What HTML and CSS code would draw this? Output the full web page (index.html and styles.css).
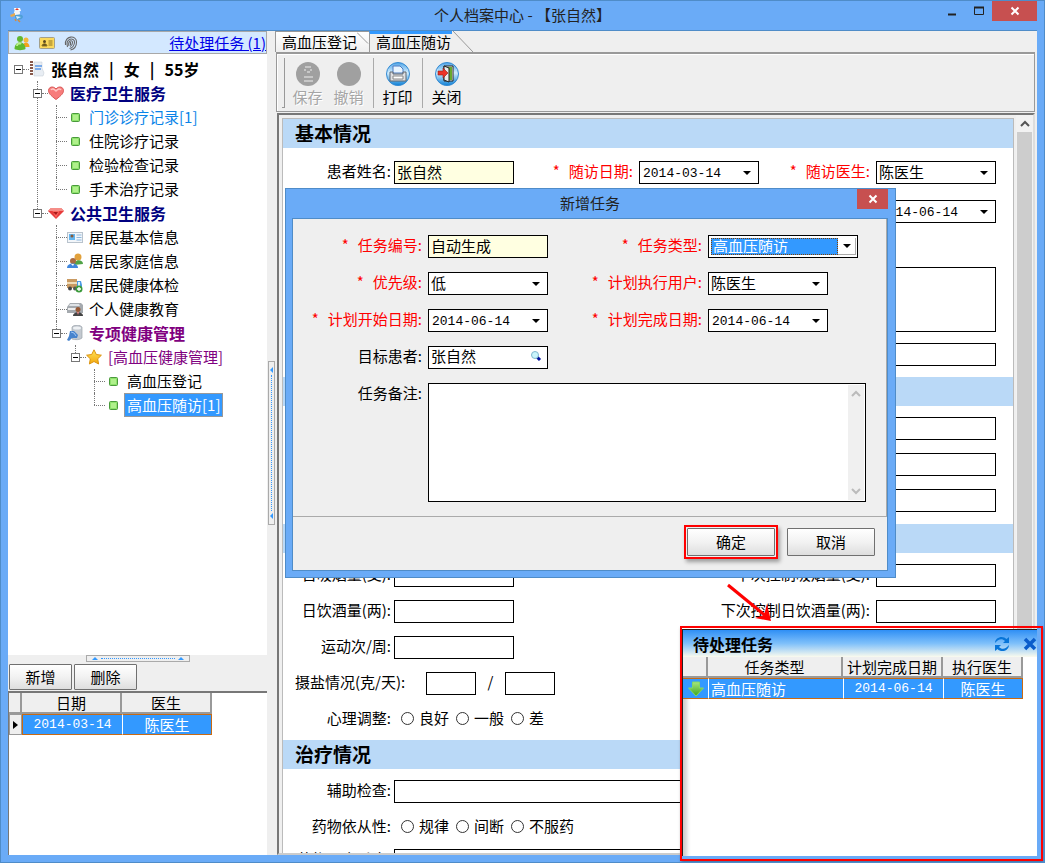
FILE: index.html
```html
<!DOCTYPE html>
<html lang="zh-CN">
<head>
<meta charset="utf-8">
<title>个人档案中心 - 【张自然】</title>
<link rel="stylesheet" href="styles.css">
</head>
<body>
<svg class="defs" width="0" height="0" aria-hidden="true">
  <defs>
    <linearGradient id="blueBall" x1="0" y1="0" x2="0" y2="1"><stop offset="0" stop-color="#4fa3e6"/><stop offset=".45" stop-color="#d4efff"/><stop offset="1" stop-color="#0b7fd6"/></linearGradient>
    <linearGradient id="green" x1="0" y1="0" x2="0" y2="1"><stop offset="0" stop-color="#a6e67d"/><stop offset="1" stop-color="#3da51f"/></linearGradient>
    <linearGradient id="gold" x1="0" y1="0" x2="0" y2="1"><stop offset="0" stop-color="#ffe45c"/><stop offset="1" stop-color="#f3a70c"/></linearGradient>
  </defs>
  <symbol id="leaf" viewBox="0 0 16 16"><rect x="4.500" y="4.500" width="8" height="8" rx="1" fill="#8ee26b" stroke="#4a9a3c"/><rect x="6" y="6" width="5" height="5" fill="#b0f08c"/></symbol>
  <symbol id="chev" viewBox="0 0 10 10"><path d="M1 7l4-4 4 4" fill="none" stroke="currentColor" stroke-width="2"/></symbol>
  <symbol id="cross" viewBox="0 0 10 10"><path d="M1.500 1.500l7 7M8.500 1.500l-7 7" stroke="currentColor" stroke-width="2"/></symbol>
</svg>
<div class="window">
  <header class="titlebar">
    <svg class="app-icon" width="16" height="16" viewBox="0 0 16 16"><path d="M5 1l6 0 1 3-6 1z" fill="#fff"/><path d="M8 1v3M6.500 2.500h3" stroke="#e23a2a"/><circle cx="8" cy="6" r="3" fill="#f2f5f8"/><path d="M1 8l5-2 0 3-4 1z" fill="#e8aa50"/><path d="M6 8c4-1 8-1 8 2-1 3-6 4-8 1z" fill="#4f9fd6"/><path d="M7 9l5 1-4 2z" fill="#d8f0ff"/><path d="M9 13l2 2M6 12l1 2" stroke="#d98b3a" stroke-width="1.500"/></svg>
    <h1>个人档案中心 - 【张自然】</h1>
    <div class="controls">
      <button class="ctl" aria-label="最小化"><svg width="12" height="12" viewBox="0 0 12 12"><path d="M2 9.500h8" stroke="#222" stroke-width="2"/></svg></button>
      <button class="ctl" aria-label="最大化"><svg width="12" height="12" viewBox="0 0 12 12"><path d="M1.500 2v7.500h9V2" fill="none" stroke="#222"/><path d="M1 2.500h10" stroke="#222" stroke-width="2"/></svg></button>
      <button class="close" aria-label="关闭窗口"><svg width="10" height="10"><use href="#cross"/></svg></button>
    </div>
  </header>

  <div class="content">
    <aside class="side">
      <div class="side-bar">
        <svg width="16" height="16" viewBox="0 0 16 16"><circle cx="12" cy="5" r="2.500" fill="#f5b93a"/><path d="M8.500 12c0-6 7-6 7 0z" fill="#f2a31a"/><circle cx="6" cy="4" r="3" fill="#61b832"/><path d="M.5 14c0-9 11-9 11 0-2 1.500-9 1.500-11 0z" fill="#5fb92f"/><path d="M3 11c0-3 3-3 4-2" stroke="#b8ee8e" stroke-width="2" fill="none"/></svg>
        <svg width="16" height="16" viewBox="0 0 16 16"><rect x=".5" y="2.500" width="15" height="11" rx="1" fill="#fbd95c" stroke="#a3a08b"/><circle cx="5.500" cy="6.500" r="1.500" fill="#5a4a20"/><path d="M3 11c0-3 5-3 5 0zM9.500 6h4M9.500 8h4M9.500 10h4" fill="#5a4a20" stroke="#8f7420"/></svg>
        <svg width="14" height="16" viewBox="0 0 14 16"><g fill="none" stroke="#666" stroke-width="1.100"><path d="M1.500 10C0 0 13 0 12.500 7c0 4-2 7-6 8"/><path d="M3.500 12C1 3 10.500 2 10.500 7c0 3-2 6-5 6.500"/><path d="M5 11C3.500 6 8.500 4 8.500 7.500 8.500 10 7 11 6 11.500"/><path d="M6.500 7v3"/></g></svg>
        <a href="#tasks">待处理任务 (1)</a>
      </div>
      <nav class="tree">
        <ul class="root">
          <li>
            <div class="node"><button class="box" aria-label="折叠"></button><i class="dash"></i><svg width="16" height="16" viewBox="0 0 16 16"><path d="M5 1h8v6l2 5-1 3H5z" fill="#e8edf3" stroke="#c1c8d0" stroke-width=".5"/><path d="M2.500 0v15" stroke="#87584a" stroke-width="3" stroke-dasharray="2 1"/><path d="M6 5h7M6 8h6" stroke="#5795e8" stroke-width="1.500"/></svg><b class="person"><span>张自然</span><span>|</span><span>女</span><span>|</span><span>55岁</span></b></div>
            <ul>
              <li>
                <div class="node"><button class="box" aria-label="折叠"></button><i class="dash"></i><svg width="16" height="16" viewBox="0 0 16 16"><path d="M8 14.500C2 10 .5 8 .5 5.500.5 2 5 .5 8 4c3-3.500 7.500-2 7.500 1.500C15.500 8 14 10 8 14.500z" fill="#f77c7b" stroke="#d95655"/><path d="M3 5c1-2 3-1 5 1 2-2 4-3 5-1" fill="none" stroke="#ffc6c3" stroke-width="1.500"/></svg><b class="navy">医疗卫生服务</b></div>
                <ul>
                  <li><div class="node leaf"><i class="dash"></i><svg width="16" height="16"><use href="#leaf"/></svg><span class="link">门诊诊疗记录[1]</span></div></li>
                  <li><div class="node leaf"><i class="dash"></i><svg width="16" height="16"><use href="#leaf"/></svg><span>住院诊疗记录</span></div></li>
                  <li><div class="node leaf"><i class="dash"></i><svg width="16" height="16"><use href="#leaf"/></svg><span>检验检查记录</span></div></li>
                  <li><div class="node leaf"><i class="dash"></i><svg width="16" height="16"><use href="#leaf"/></svg><span>手术治疗记录</span></div></li>
                </ul>
              </li>
              <li>
                <div class="node"><button class="box" aria-label="折叠"></button><i class="dash"></i><svg width="16" height="16" viewBox="0 0 16 16"><path d="M3 3h10l3 3-8 8-8-8z" fill="#e73b3b"/><path d="M3 3h10l3 3H0z" fill="#f58e88"/><path d="M4.500 6h7L8 13z" fill="#f9655f"/><path d="M5 7h5l-2 3z" fill="#a91919"/></svg><b class="navy">公共卫生服务</b></div>
                <ul>
                  <li><div class="node leaf"><i class="dash"></i><svg width="16" height="16" viewBox="0 0 16 16"><rect x=".5" y="3.500" width="15" height="10" fill="#f2f6fa" stroke="#b9c3cd"/><rect x="2" y="5" width="6" height="6" fill="#64b5ee"/><circle cx="5" cy="7" r="1.500" fill="#8a5a38"/><path d="M9.500 6h5M9.500 8.500h5M9.500 11h5" stroke="#8fb8dd"/></svg><span>居民基本信息</span></div></li>
                  <li><div class="node leaf"><i class="dash"></i><svg width="16" height="16" viewBox="0 0 16 16"><circle cx="11" cy="4" r="3.500" fill="#e2a13c"/><path d="M7 12c0-6 9-6 9-1z" fill="#51a348"/><circle cx="6" cy="8" r="3" fill="#a96b42"/><path d="M0 15c0-6 11-6 11 0z" fill="#3f86dd"/><path d="M4 11l2 2 1-2z" fill="#fff"/></svg><span>居民家庭信息</span></div></li>
                  <li><div class="node leaf"><i class="dash"></i><svg width="16" height="16" viewBox="0 0 16 16"><path d="M0 2h10v9H0z" fill="#c99a62"/><path d="M0 5h10v2H0z" fill="#f0dcb8"/><path d="M10 4h4l1 4v3h-5z" fill="#4d9be4"/><path d="M11 5h2v4h-2z" fill="#d9f1ff"/><circle cx="3" cy="11.500" r="2" fill="#444"/><circle cx="8" cy="11.500" r="2" fill="#555"/><circle cx="12" cy="12" r="3.500" fill="#3c9b3c"/><path d="M12 10v4M10 12h4" stroke="#fff" stroke-width="1.300"/></svg><span>居民健康体检</span></div></li>
                  <li><div class="node leaf"><i class="dash"></i><svg width="16" height="16" viewBox="0 0 16 16"><path d="M3 2h11l2 2v8H0V6z" fill="#a5aaaf"/><path d="M3 3h9l1 2H2z" fill="#dfe3e6"/><path d="M1 8h8" stroke="#eee" stroke-width="2"/><circle cx="11" cy="8.500" r="2.500" fill="#965936"/><path d="M6 15c0-5 10-5 10 0z" fill="#444"/><path d="M10 11h2l-1 3z" fill="#e88"/></svg><span>个人健康教育</span></div></li>
                  <li>
                    <div class="node"><button class="box" aria-label="折叠"></button><i class="dash"></i><svg width="16" height="16" viewBox="0 0 16 16"><path d="M5 2c3-3 8-2 10 0v11c-2 2-7 2-10 1z" fill="#c3c9d0" stroke="#9ca3ab" stroke-width=".7"/><ellipse cx="10" cy="3" rx="4" ry="1.500" fill="#eef1f4"/><path d="M3 6l4 0 4 4-1 3-5 0-3 3-2-1 2-4z" fill="#4783cd"/><path d="M4 7l3 1 2 3" stroke="#9fc6f4" fill="none"/></svg><b class="purple">专项健康管理</b></div>
                    <ul>
                      <li>
                        <div class="node"><button class="box" aria-label="折叠"></button><i class="dash"></i><svg width="16" height="16" viewBox="0 0 16 16"><path d="M8 .8l2.300 4.700 5.100.7-3.700 3.600.9 5.200L8 12.500 3.400 15l.9-5.200L.6 6.200l5.100-.7z" fill="url(#gold)" stroke="#dc9410"/></svg><span class="purple">[高血压健康管理]</span></div>
                        <ul>
                          <li><div class="node leaf"><i class="dash"></i><svg width="16" height="16"><use href="#leaf"/></svg><span>高血压登记</span></div></li>
                          <li><div class="node leaf"><i class="dash"></i><svg width="16" height="16"><use href="#leaf"/></svg><span class="selected">高血压随访[1]</span></div></li>
                        </ul>
                      </li>
                    </ul>
                  </li>
                </ul>
              </li>
            </ul>
          </li>
        </ul>
      </nav>
      <div class="split-h"><span class="grip"><i class="tri-up"></i><i class="dots"></i><i class="tri-up"></i></span></div>
      <div class="side-actions"><button class="btn">新增</button><button class="btn">删除</button></div>
      <div class="visits">
        <table class="grid">
          <colgroup><col class="c-mark"><col class="c-date"><col class="c-doc"></colgroup>
          <thead><tr><th></th><th>日期</th><th>医生</th></tr></thead>
          <tbody><tr><td class="mark"><i class="tri-right"></i></td><td class="num">2014-03-14</td><td>陈医生</td></tr></tbody>
        </table>
      </div>
    </aside>

    <div class="split-v"><span class="grip-v"><i class="tri-left"></i><i class="dots-v"></i><i class="tri-left"></i></span></div>

    <main class="main">
      <div class="tabs">
        <button class="tab">高血压登记<svg class="slope" width="12" height="21" viewBox="0 0 12 21"><path d="M0 .5l11 11" stroke="#999" fill="none"/></svg></button>
        <button class="tab active">高血压随访<svg class="slope" width="21" height="21" viewBox="0 0 21 21"><path d="M0 0h2l19 21H0z" fill="#efefef"/><path d="M1 0l20 21" stroke="#999" fill="none"/></svg></button>
      </div>
      <div class="toolbar">
        <i class="handle"></i>
        <button class="tool" disabled><svg width="26" height="26" viewBox="0 0 26 26"><circle cx="13" cy="13" r="12" fill="#a0a0a0"/><path d="M10 6h6M9 9h2M15 9h2M12 11h3M9 16h9M9 20h9" stroke="#eee" stroke-width="1.200"/></svg>保存</button>
        <button class="tool" disabled><svg width="26" height="26" viewBox="0 0 26 26"><circle cx="13" cy="13" r="12" fill="#a0a0a0"/></svg>撤销</button>
        <i class="sep"></i>
        <button class="tool"><svg width="26" height="26" viewBox="0 0 26 26"><circle cx="13" cy="13" r="11.500" fill="url(#blueBall)" stroke="#338ad2"/><path d="M8 12V5h7l3 3v4z" fill="#e9f5ff" stroke="#4e7bc1"/><path d="M5 11h3v2h10v-2h3v9H5z" fill="#dedfe2" stroke="#61676e"/><path d="M8 15h10v3H8z" fill="#fff" stroke="#888"/></svg>打印</button>
        <i class="sep"></i>
        <button class="tool"><svg width="26" height="26" viewBox="0 0 26 26"><circle cx="13" cy="13" r="11.500" fill="url(#blueBall)" stroke="#338ad2"/><path d="M10 5h9v15h-9z" fill="#fff" stroke="#222"/><path d="M14 6h4v13h-4z" fill="#69a92f"/><path d="M10 5l5 2v14l-5-2z" fill="#e9ebec" stroke="#222"/><path d="M4 10h5V7l5 5-5 5v-3H4z" fill="#ed3227" stroke="#8d1e17" stroke-width=".6"/></svg>关闭</button>
      </div>
      <div class="doc">
        <form class="form">
          <section>
            <h2>基本情况</h2>
            <div class="rows wide">
              <div class="row"><label for="name">患者姓名:</label><input id="name" class="field yellow" value="张自然"><label class="req" for="vdate"><i>*</i>随访日期:</label><input id="vdate" class="field date" value="2014-03-14"><label class="req" for="vdoc"><i>*</i>随访医生:</label><select id="vdoc" class="field"><option>陈医生</option></select></div>
              <div class="row"><input class="field date last" value="2014-06-14" aria-label="下次随访日期"></div>
              <textarea class="field area" aria-label="症状"></textarea>
              <input class="field full" aria-label="其他症状">
            </div>
          </section>
          <section>
            <h2></h2>
            <div class="rows">
              <div class="row"><input class="field last" aria-label="体征一"></div>
              <div class="row"><input class="field last" aria-label="体征二"></div>
              <div class="row"><input class="field last" aria-label="体征三"></div>
            </div>
          </section>
          <section>
            <h2></h2>
            <div class="rows">
              <div class="row"><label for="smoke">日吸烟量(支):</label><input id="smoke" class="field"><label class="long" for="smoke2">下次控制吸烟量(支):</label><input id="smoke2" class="field"></div>
              <div class="row"><label for="wine">日饮酒量(两):</label><input id="wine" class="field"><label class="long" for="wine2">下次控制日饮酒量(两):</label><input id="wine2" class="field"></div>
              <div class="row"><label for="sport">运动次/周:</label><input id="sport" class="field"></div>
              <div class="salt"><label for="salt">摄盐情况(克/天):</label><input id="salt" class="field"><span>/</span><input class="field" aria-label="目标摄盐量"></div>
              <div class="radios"><span>心理调整:</span><label><input type="radio" name="mind">良好</label><label><input type="radio" name="mind">一般</label><label><input type="radio" name="mind">差</label></div>
            </div>
          </section>
          <section>
            <h2>治疗情况</h2>
            <div class="rows">
              <div class="row"><label for="exam">辅助检查:</label><input id="exam" class="field span"></div>
              <div class="radios"><span>药物依从性:</span><label><input type="radio" name="drug">规律</label><label><input type="radio" name="drug">间断</label><label><input type="radio" name="drug">不服药</label></div>
              <div class="row"><label for="adr">药物不良反应:</label><input id="adr" class="field span"></div>
            </div>
          </section>
        </form>
        <div class="scroll"><svg width="10" height="10"><use href="#chev"/></svg><i class="thumb"></i></div>
      </div>
    </main>
  </div>

  <div class="dialog" role="dialog" aria-labelledby="dlg-title">
    <div class="dlg-title"><h2 id="dlg-title">新增任务</h2><button class="close small" aria-label="关闭对话框"><svg width="10" height="10"><use href="#cross"/></svg></button></div>
    <div class="dlg-client">
      <div class="dlg-form">
        <label class="req" for="no"><i>*</i>任务编号:</label><input id="no" class="field yellow" value="自动生成">
        <label class="req" for="type"><i>*</i>任务类型:</label><div class="combo"><select id="type"><option>高血压随访</option></select><span class="combo-btn"><i></i></span></div>
        <label class="req" for="pri"><i>*</i>优先级:</label><select id="pri" class="field"><option>低</option></select>
        <label class="req" for="user"><i>*</i>计划执行用户:</label><select id="user" class="field"><option>陈医生</option></select>
        <label class="req" for="d1"><i>*</i>计划开始日期:</label><input id="d1" class="field date" value="2014-06-14">
        <label class="req" for="d2"><i>*</i>计划完成日期:</label><input id="d2" class="field date" value="2014-06-14">
        <label for="who">目标患者:</label><div class="field lookup"><input id="who" value="张自然"><svg width="12" height="12" viewBox="0 0 12 12"><path d="M7 7l3 3" stroke="#00109c" stroke-width="3"/><circle cx="5" cy="5" r="3.500" fill="#c9f5fb" stroke="#7fb7cf"/></svg></div>
        <label class="memo-label" for="memo">任务备注:</label><div class="memo"><textarea id="memo"></textarea><div class="memo-scroll"><svg width="10" height="10"><use href="#chev"/></svg><svg class="down" width="10" height="10"><use href="#chev"/></svg></div></div>
      </div>
      <div class="dlg-foot"><span class="mark-ok"><button class="btn">确定</button></span><button class="btn">取消</button></div>
    </div>
  </div>

  <svg class="arrow" width="50" height="42" viewBox="0 0 50 42"><path d="M3 3l37 30" stroke="#c8b0b0" stroke-width="3" opacity=".5"/><path d="M2 2l39 32" stroke="#f00" stroke-width="3"/><path d="M45 38l-16-3 9-3 3-11z" fill="#f00"/></svg>

  <div class="callout" id="tasks">
    <div class="popup">
      <div class="pop-title"><h2>待处理任务</h2>
        <button aria-label="刷新"><svg width="16" height="16" viewBox="0 0 16 16"><g fill="#0875d8"><path d="M1 7C1 1 9-1 12.500 3L15 1v6H9l2-2C8 2 4 3 1 7z"/><path d="M15 9c0 6-8 8-11.500 4L1 15V9h6l-2 2c3 3 7 2 10-2z"/></g></svg></button>
        <button aria-label="关闭"><svg width="14" height="14" viewBox="0 0 14 14"><path d="M2 2l10 10M12 2L2 12" stroke="#0a5ccb" stroke-width="3.500"/></svg></button>
      </div>
      <table class="grid">
        <colgroup><col class="t-icon"><col class="t-type"><col class="t-date"><col class="t-doc"></colgroup>
        <thead><tr><th></th><th>任务类型</th><th>计划完成日期</th><th>执行医生</th></tr></thead>
        <tbody><tr><td><svg width="16" height="16" viewBox="0 0 16 16"><path d="M4.500 1h7v6H15.500L8 15 .5 7h4z" fill="url(#green)" stroke="#82d866"/></svg></td><td class="left">高血压随访</td><td class="num">2014-06-14</td><td>陈医生</td></tr></tbody>
      </table>
    </div>
  </div>
</div>
</body>
</html>
```
FILE: styles.css
```css
:root {
  --blue: #6aabf7;
  --edge: #4f8cc8;
  --face: #efefef;
  --band: #bad9f7;
  --select: #3399ff;
  --arrow: url("data:image/svg+xml,%3Csvg xmlns='http://www.w3.org/2000/svg' width='8' height='4'%3E%3Cpath d='M0 0h8L4 4z'/%3E%3C/svg%3E");
}
* { box-sizing: border-box; }
body {
  margin: 0;
  font: 15px/20px "Noto Sans CJK SC", sans-serif;
  color: #000;
}
button, input, select, textarea { font: inherit; color: inherit; margin: 0; padding: 0; border: 0; border-radius: 0; background: none; }
input, select, textarea { min-width: 0; outline: 0; }
select { appearance: none; }
textarea { resize: none; }
h1, h2 { margin: 0; font: inherit; }
ul { list-style: none; margin: 0; padding: 0; }
svg { display: block; flex: none; }
i { font-style: normal; }
.defs { position: absolute; }

.window {
  position: relative;
  display: flex;
  flex-direction: column;
  height: 100vh;
  overflow: hidden;
  border: 1px solid var(--edge);
  background: var(--blue);
  padding: 0 7px 7px;
}
.titlebar { display: grid; grid-template-columns: 1fr auto 1fr; height: 29px; flex: none; }
.titlebar h1 { color: #222; padding-top: 4px; }
.app-icon { margin: 6px 1px; }
.controls { display: flex; justify-content: flex-end; height: 20px; }
.ctl { width: 27px; display: grid; place-items: center; }
.close { width: 45px; height: 20px; background: #c75050; color: #fff; display: grid; place-items: center; }

.content { flex: 1; min-height: 0; display: flex; background: var(--face); border-top: 1px solid var(--edge); }

.side { width: 259px; flex: none; display: flex; flex-direction: column; }
.side-bar { height: 23px; flex: none; display: flex; align-items: center; gap: 9px; padding-left: 5px; background: #d3e8ff; border: 1px solid #a8a8a8; }
.side-bar a { margin-left: auto; color: #0000e8; white-space: pre; }
.tree { flex: 1; min-height: 0; background: #fff; padding: 3px 0 0 6px; }
.tree ul ul { margin-left: 19px; }
.tree li { position: relative; }
.tree ul ul > li::before { content: ""; position: absolute; left: 4px; top: 0; bottom: 0; border-left: 1px dotted #777; }
.tree ul ul > li:last-child::before { bottom: auto; height: 12px; }
.node { height: 24px; display: flex; align-items: center; white-space: nowrap; }
.box { position: relative; width: 9px; height: 9px; border: 1px solid #777; background: linear-gradient(#000, #000) center / 5px 1px no-repeat #fff; }
.dash { width: 6px; border-top: 1px dotted #777; }
.leaf .dash { width: 11px; margin-left: 4px; }
.node > b, .node > span { margin-left: 4px; padding: 0 2px; line-height: 22px; }
.node b { font-size: 16px; }
.person { display: flex; gap: 10px; }
.navy { color: #000080; }
.purple { color: #800080; }
.link { color: #0a84e8; }
.node .selected { background: var(--select); color: #fff; outline: 1px solid #999; }

.split-h { height: 8px; flex: none; display: flex; justify-content: center; }
.grip { width: 104px; height: 7px; border: 1px solid #aaa; display: flex; align-items: center; justify-content: space-between; padding: 0 5px; }
.dots { width: 74px; border-top: 1px dotted var(--select); }
.tri-up { border: 3px solid transparent; border-top: 0; border-bottom-color: var(--select); }
.side-actions { height: 28px; flex: none; display: flex; gap: 2px; padding: 1px; }
.btn { height: 26px; border: 1px solid #707070; border-radius: 1px; background: linear-gradient(#fff, #f2f2f2 50%, #dedede); }
.side-actions .btn { width: 63px; }
.visits { height: 164px; flex: none; background: #fff; border-top: 2px solid #777; border-left: 1px solid #777; }

.grid { border-collapse: separate; border-spacing: 0; table-layout: fixed; width: 0; }
.grid th { height: 21px; padding: 0; font-weight: 400; background: var(--face); border-right: 2px solid #999; border-bottom: 2px solid #999; line-height: 18px; white-space: nowrap; }
.grid td { height: 21px; padding: 0; text-align: center; color: #fff; background: var(--select); border: 1px solid #c86a14; border-width: 1px 0; line-height: 18px; white-space: nowrap; }
.grid td + td { border-left: 1px solid #fff; }
.grid td:last-child { border-right: 1px solid #c86a14; }
.grid td:first-child svg { margin: 0 auto; }
.grid td.left { text-align: left; padding-left: 2px; }
.grid td.mark { background: var(--face); border: 1px solid #999; }
.grid td.mark + td { border-left-color: #c86a14; }
.num, .date { font-family: "Liberation Mono", monospace; font-size: 13px; }
.c-mark { width: 13px; } .c-date { width: 100px; } .c-doc { width: 90px; }
.t-icon { width: 25px; } .t-type { width: 135px; } .t-date { width: 100px; } .t-doc { width: 80px; }
.tri-right { display: block; width: 0; margin: 0 auto; border: 4px solid transparent; border-right: 0; border-left: 5px solid #000; }

.split-v { width: 8px; flex: none; display: flex; align-items: center; justify-content: center; }
.grip-v { width: 7px; height: 164px; border: 1px solid #aaa; display: flex; flex-direction: column; align-items: center; justify-content: space-between; padding: 5px 0; }
.tri-left { border: 3px solid transparent; border-left: 0; border-right-color: var(--select); }
.dots-v { height: 136px; border-left: 1px dotted var(--select); }

.main { flex: 1; min-width: 0; display: flex; flex-direction: column; }
.tabs { height: 21px; flex: none; display: flex; }
.tab { position: relative; width: 94px; text-align: left; padding-left: 6px; border: 1px solid #999; border-width: 1px 0 0 1px; background: linear-gradient(#fff, var(--face)); white-space: nowrap; }
.tab .slope { position: absolute; right: 0; top: 0; }
.tab.active { width: 84px; border-top: 3px solid var(--select); background: var(--face); line-height: 16px; padding-bottom: 2px; }
.tab.active .slope { right: -20px; top: -3px; }
.toolbar { height: 60px; flex: none; display: flex; align-items: center; margin: 0 2px 0 1px; padding-left: 5px; border: 1px solid #999; border-top-width: 2px; box-shadow: inset 1px 1px #fff; }
.handle { width: 3px; height: 50px; border: 1px solid #999; border-left: 0; border-top: 0; margin-right: 2px; }
.sep { width: 1px; height: 50px; background: #aaa; margin: 0 3px 0 4px; }
.tool { width: 41px; display: flex; flex-direction: column; align-items: center; padding-top: 2px; }
.tool:disabled { color: #a5a5a5; text-shadow: 1px 1px #fff; }

.doc { flex: 1; min-height: 0; display: flex; margin: 1px 2px 0; border: 2px solid #777; border-right-color: #ddd; border-bottom-color: #ccc; }
.form { flex: 1; min-width: 0; margin: 3px 2px 0 3px; overflow: hidden; background: #fff; border: 1px solid #bbb; border-bottom: 0; }
.form h2 { height: 29px; background: var(--band); font-size: 19px; font-weight: 700; line-height: 28px; padding-left: 12px; }
.rows { display: flex; flex-direction: column; gap: 13px; padding: 11px 17px 12px 0; }
.rows.wide { gap: 16px; padding: 13px 17px 11px 0; }
.row { display: grid; grid-template-columns: 111px 120px 1fr 120px 117px 120px; }
.row .last { grid-column: 6; }
.row .span { grid-column: 2 / -1; }
.row .long { grid-column: 3 / 6; }
.form label, .dlg-form label { text-align: right; padding-right: 6px; white-space: nowrap; }
.form .row label:first-child { margin-left: -12px; padding-right: 3px; }
.area { margin: 28px 0 -5px 111px; }
.full { margin-left: 111px; }
.req { color: #f00; }
.req i { margin-right: 9px; }
.field { height: 23px; border: 1px solid #000; background: #fff; padding: 0 2px 3px; }
textarea.area { height: 65px; }
.yellow { background: #ffffe1; }
select.field, .date.field { background: var(--arrow) right 7px center / 8px 4px no-repeat #fff; }
.date.field { padding: 1px 3px 0; }
.salt { display: flex; gap: 10px; padding-left: 12px; }
.form .salt label { width: 121px; text-align: left; }
.salt .field { width: 50px; }
.salt span { width: 9px; text-align: center; }
.radios { display: flex; align-items: center; gap: 7px; height: 20px; }
.radios > span { width: 111px; text-align: right; padding-right: 3px; }
.form .radios label { display: flex; align-items: center; gap: 5px; padding: 0; }
.radios input { appearance: none; width: 13px; height: 13px; border: 1px solid #333; border-radius: 50%; background: #fff; }
.scroll { width: 17px; background: #f2f2f2; display: flex; flex-direction: column; align-items: center; color: #555; padding-top: 4px; }
.thumb { flex: 1; width: 15px; margin-top: 3px; background: #cdcdcd; }

.dialog { position: absolute; left: 284px; top: 187px; width: 611px; border: 1px solid var(--edge); background: var(--blue); padding: 0 7px 6px 6px; }
.dlg-title { position: relative; height: 29px; text-align: center; color: #222; padding-top: 4px; }
.close.small { position: absolute; right: 0; top: 0; width: 31px; }
.dlg-client { background: var(--face); border: 1px solid var(--edge); }
.dlg-form { display: grid; grid-template-columns: 135px 120px 160px 1fr; gap: 14px 0; padding: 16px 20px 14px 0; border-bottom: 1px solid #aaa; border-right: 1px solid #aaa; }
.dlg-form > .field { width: 120px; }
.combo { width: 150px; height: 23px; display: flex; border: 1px solid #000; background: #fff; padding: 2px 1px 2px 2px; }
.combo select { flex: 1; background: var(--select); color: #fff; outline: 1px dotted #804000; outline-offset: -1px; line-height: 16px; padding: 0 2px 2px; }
.combo-btn { width: 18px; display: grid; place-items: center; border: 1px solid #aaa; border-width: 0 1px 1px 0; }
.combo-btn i { width: 8px; height: 4px; background: var(--arrow); }
.lookup { display: flex; align-items: center; padding-right: 5px; }
.lookup input { flex: 1; }
.dlg-form .memo-label { grid-column: 1; }
.dlg-form .memo { grid-column: 2 / -1; }
.memo { height: 119px; display: flex; border: 1px solid #000; background: #fff; padding: 1px; }
.memo textarea { flex: 1; }
.memo-scroll { width: 16px; background: #f0f0f0; color: #bbb; display: flex; flex-direction: column; justify-content: space-between; align-items: center; padding: 4px 0; }
.down { transform: rotate(180deg); }
.dlg-foot { display: flex; justify-content: flex-end; align-items: center; gap: 9px; padding: 8px 12px 11px; }
.dlg-foot .btn { width: 88px; height: 28px; }
.mark-ok { display: flex; padding: 1px; border: 2px solid #f00; box-shadow: 2px 3px 4px rgba(0, 0, 0, .35); }

.arrow { position: absolute; left: 725px; top: 582px; }
.callout { position: absolute; right: 1px; bottom: 1px; width: 363px; height: 235px; border: 2px solid #f00; padding: 1px 4px 3px 0; box-shadow: 1px 2px 3px rgba(0, 0, 0, .35); }
.popup { height: 100%; background: #fff; border: 1px solid #222; border-width: 1px 0 0 1px; box-shadow: inset 4px 4px 4px rgba(0, 0, 0, .2); }
.pop-title { height: 27px; display: flex; align-items: center; gap: 13px; padding-left: 10px; background: linear-gradient(#2f8ff5, #7fc0fa 50%, #fbfbee); }
.pop-title h2 { flex: 1; font-size: 16px; font-weight: 700; }
```
